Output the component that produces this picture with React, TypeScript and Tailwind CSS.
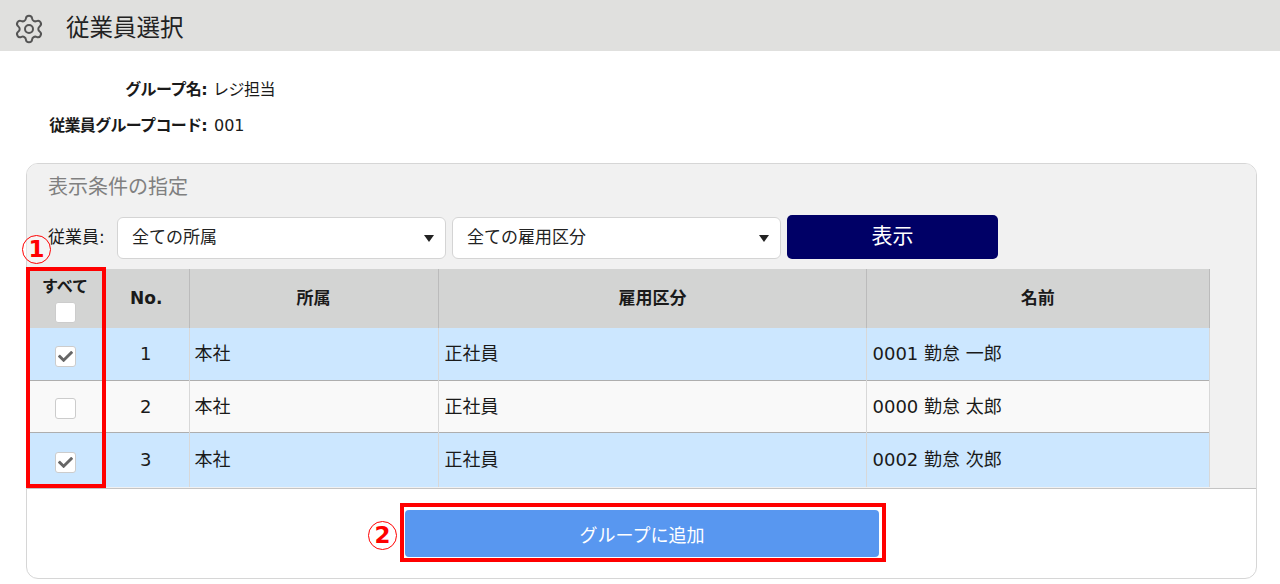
import { Settings } from "lucide-react";
import { FaCheck } from "react-icons/fa";

const rows = [
  { no: 1, dept: "本社", type: "正社員", name: "0001 勤怠 一郎", checked: true },
  { no: 2, dept: "本社", type: "正社員", name: "0000 勤怠 太郎", checked: false },
  { no: 3, dept: "本社", type: "正社員", name: "0002 勤怠 次郎", checked: true },
];

function Checkbox({ checked }: { checked?: boolean }) {
  return (
    <div className="flex h-[21px] w-[21px] items-center justify-center rounded-[3px] border border-[#cccccc] bg-white">
      {checked && <FaCheck className="text-[15px] text-[#666666]" />}
    </div>
  );
}

function SelectBox({ label }: { label: string }) {
  return (
    <div className="flex h-[42px] w-[329px] items-center justify-between rounded-[6px] border border-[#d4d4d4] bg-white pl-[14px] pr-[11px] text-[17px] text-[#222222]">
      <span>{label}</span>
      <span className="h-0 w-0 border-x-[5px] border-t-[7px] border-x-transparent border-t-[#222222]" />
    </div>
  );
}

function CircledNumber({ n, className }: { n: number; className: string }) {
  return (
    <div
      className={`absolute flex h-[29px] w-[29px] items-center justify-center rounded-full border border-[#ff0000] bg-white/30 text-[23px] leading-none font-bold text-[#ff0000] ${className}`}
    >
      {n}
    </div>
  );
}

export default function App() {
  return (
    <div
      className="relative h-[584px] w-[1280px] overflow-hidden bg-white text-[#1a1a1a]"
      style={{ fontFamily: '"DejaVu Sans", "Noto Sans CJK JP", sans-serif' }}
    >
      <div className="flex h-[51px] items-center bg-[#e0e0de] pt-[7px] pl-[13px]">
        <Settings className="h-[32px] w-[32px] text-[#555555]" strokeWidth={1.5} />
        <h1 className="ml-[21px] text-[23.5px] font-normal text-[#222222]">従業員選択</h1>
      </div>

      <div className="mt-[27px] space-y-[12px] text-[16px]">
        <div className="flex h-[24px] items-center">
          <span className="w-[207px] text-right font-bold tracking-[-0.6px]">グループ名:</span>
          <span className="ml-[6px] tracking-[-0.5px]">レジ担当</span>
        </div>
        <div className="flex h-[24px] items-center">
          <span className="w-[207px] text-right font-bold tracking-[-0.7px]">従業員グループコード:</span>
          <span className="ml-[7px]">001</span>
        </div>
      </div>

      <div className="mt-[25px] ml-[26px] h-[416px] w-[1231px] overflow-hidden rounded-[12px] border border-[#d6d6d6] bg-white">
        <div className="h-[325px] border-b border-[#c4c4c4] bg-[#f1f1f1]">
          <div className="h-[47px] pt-[8px] pl-[21px] text-[20px] text-[#808080]">表示条件の指定</div>
          <div className="flex h-[58px] items-start pt-[4px] pl-[21px]">
            <span className="mt-[10px] w-[69px] text-[17px]">従業員:</span>
            <div className="flex items-end gap-[6px]">
              <SelectBox label="全ての所属" />
              <SelectBox label="全ての雇用区分" />
              <button className="h-[44px] w-[211px] rounded-[5px] bg-[#000066] text-[21px] text-white">表示</button>
            </div>
          </div>

          <table className="w-[1183px] table-fixed border-collapse">
            <colgroup>
              <col className="w-[79px]" />
              <col className="w-[83px]" />
              <col className="w-[249px]" />
              <col className="w-[428px]" />
              <col />
            </colgroup>
            <thead>
              <tr className="h-[59px] bg-[#d3d4d3] text-[17px]">
                <th className="p-0 pr-[3px]">
                  <div className="flex flex-col items-center gap-[5px] pt-[2px]">
                    <span className="text-[16px] leading-[20px]">すべて</span>
                    <Checkbox />
                  </div>
                </th>
                <th className="border-r border-[#bbbbbb] p-0 pr-[2px]">No.</th>
                <th className="border-r border-[#bbbbbb] p-0">所属</th>
                <th className="border-r border-[#bbbbbb] p-0 pl-[1px]">雇用区分</th>
                <th className="border-r border-[#bbbbbb] p-0">名前</th>
              </tr>
            </thead>
            <tbody>
              {rows.map((row) => (
                <tr
                  key={row.no}
                  className={`border-b border-[#aeaeae] text-[18px] last:border-b-0 ${row.checked ? "bg-[#cce7ff]" : "bg-[#f9f9f9]"} ${row.no === 3 ? "h-[55px]" : "h-[52px]"}`}
                >
                  <td className="p-0 pr-[3px]">
                    <div className="flex justify-center pt-[5px]">
                      <Checkbox checked={row.checked} />
                    </div>
                  </td>
                  <td className="border-r border-[#d8d8d8] p-0 pr-[3px] text-center">{row.no}</td>
                  <td className="border-r border-[#d8d8d8] p-0 pl-[5px]">{row.dept}</td>
                  <td className="border-r border-[#d8d8d8] p-0 pl-[6px]">{row.type}</td>
                  <td className="border-r border-[#d8d8d8] p-0 pl-[6px]">{row.name}</td>
                </tr>
              ))}
            </tbody>
          </table>
        </div>

        <div className="ml-[378px] mt-[21px]">
          <button className="h-[47px] w-[474px] rounded-[4px] bg-[#5897f0] pt-[3px] text-[18px] text-white">グループに追加</button>
        </div>
      </div>

      <div className="absolute top-[267px] left-[26px] h-[221px] w-[80px] border-[4px] border-[#ff0000]" />
      <div className="absolute top-[503px] left-[400px] h-[59px] w-[486px] border-[4px] border-[#ff0000]" />
      <CircledNumber n={1} className="top-[235px] left-[22px]" />
      <CircledNumber n={2} className="top-[521px] left-[368px]" />
    </div>
  );
}
